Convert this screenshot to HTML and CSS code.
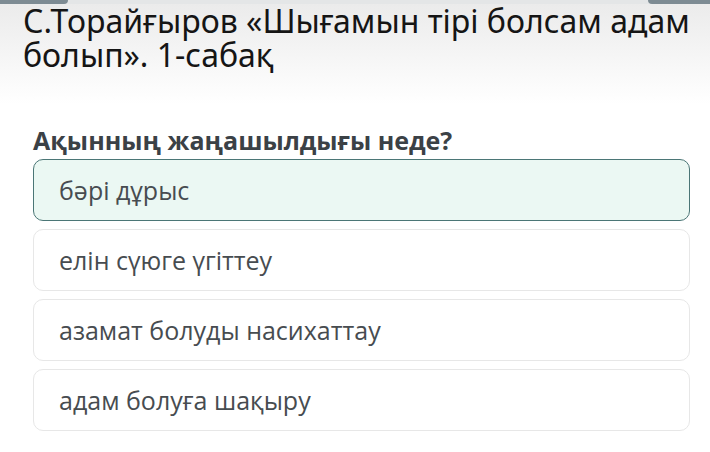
FILE: index.html
```html
<!DOCTYPE html>
<html lang="kk">
<head>
    <meta charset="UTF-8">
    <meta name="viewport" content="width=device-width, initial-scale=1.0">
    <title>1-сабақ</title>
    <link rel="stylesheet" href="styles.css">
</head>
<body>
    <div class="topbar">
        <span class="tab tab-left"></span>
        <span class="tab tab-right"></span>
    </div>
    <header class="header">
        <h1 class="title">С.Торайғыров «Шығамын тірі болсам адам болып». 1-сабақ</h1>
    </header>
    <main class="quiz">
        <h2 class="question">Ақынның жаңашылдығы неде?</h2>
        <div class="options">
            <div class="option selected">бәрі дұрыс</div>
            <div class="option">елін сүюге үгіттеу</div>
            <div class="option">азамат болуды насихаттау</div>
            <div class="option">адам болуға шақыру</div>
        </div>
    </main>
</body>
</html>
```

FILE: styles.css
```css
body {
    margin: 0;
    width: 710px;
    height: 452px;
    overflow: hidden;
    background: #fff;
    font-family: "Open Sans", "Noto Sans", sans-serif;
}
.topbar {
    height: 4px;
    background: #e4e6e7;
    display: flex;
    justify-content: space-between;
}
.tab {
    display: block;
    height: 4px;
    background: #7d8b93;
}
.tab-left {
    width: 68px;
    border-radius: 0 0 4px 0;
}
.tab-right {
    width: 62px;
    border-radius: 0 0 0 4px;
}
.header {
    height: 100px;
    padding: 0 10px 0 23px;
    background: linear-gradient(#ebebeb, #fff);
}
.title {
    margin: 0;
    font-family: "Noto Sans", sans-serif;
    font-weight: 400;
    font-size: 32px;
    line-height: 34px;
    color: #151515;
}
.quiz {
    padding: 20px 20px 0 33px;
}
.question {
    margin: 0 0 3px;
    font-size: 25px;
    line-height: 32px;
    font-weight: 700;
    color: #3b4146;
}
.options {
    display: flex;
    flex-direction: column;
    gap: 8px;
}
.option {
    width: 657px;
    height: 62px;
    box-sizing: border-box;
    display: flex;
    align-items: center;
    padding-left: 25px;
    border: 1.5px solid #e7e7e7;
    border-radius: 10px;
    font-size: 25px;
    color: #474c50;
}
.option.selected {
    background: #ebf8f3;
    border-color: #4b7676;
}
```
